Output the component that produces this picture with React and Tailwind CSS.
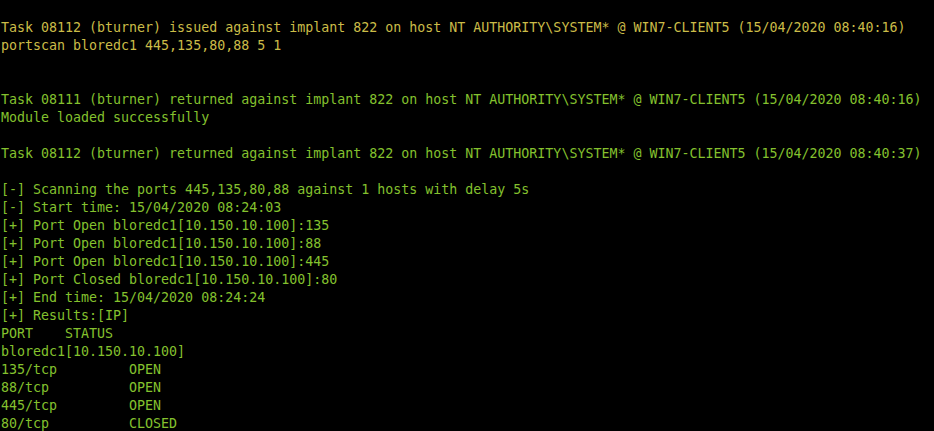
const Y = 'text-[#cbbc48]';
const G = 'text-[#84c12e]';

const lines = [
  ['', ''],
  [Y, 'Task 08112 (bturner) issued against implant 822 on host NT AUTHORITY\\SYSTEM* @ WIN7-CLIENT5 (15/04/2020 08:40:16)'],
  [Y, 'portscan bloredc1 445,135,80,88 5 1'],
  ['', ''],
  ['', ''],
  [G, 'Task 08111 (bturner) returned against implant 822 on host NT AUTHORITY\\SYSTEM* @ WIN7-CLIENT5 (15/04/2020 08:40:16)'],
  [G, 'Module loaded successfully'],
  ['', ''],
  [G, 'Task 08112 (bturner) returned against implant 822 on host NT AUTHORITY\\SYSTEM* @ WIN7-CLIENT5 (15/04/2020 08:40:37)'],
  ['', ''],
  [G, '[-] Scanning the ports 445,135,80,88 against 1 hosts with delay 5s'],
  [G, '[-] Start time: 15/04/2020 08:24:03'],
  [G, '[+] Port Open bloredc1[10.150.10.100]:135'],
  [G, '[+] Port Open bloredc1[10.150.10.100]:88'],
  [G, '[+] Port Open bloredc1[10.150.10.100]:445'],
  [G, '[+] Port Closed bloredc1[10.150.10.100]:80'],
  [G, '[+] End time: 15/04/2020 08:24:24'],
  [G, '[+] Results:[IP]'],
  [G, 'PORT    STATUS'],
  [G, 'bloredc1[10.150.10.100]'],
  [G, '135/tcp         OPEN'],
  [G, '88/tcp          OPEN'],
  [G, '445/tcp         OPEN'],
  [G, '80/tcp          CLOSED'],
];

export default function App() {
  return (
    <div className="w-[934px] h-[431px] overflow-hidden bg-black pt-[1px] px-[1px] font-['DejaVu_Sans_Mono',monospace] text-[13.3px] leading-[18px]">
      {lines.map(([color, text], i) => (
        <div key={i} className={`h-[18px] whitespace-pre ${color}`}>{text}</div>
      ))}
    </div>
  );
}
